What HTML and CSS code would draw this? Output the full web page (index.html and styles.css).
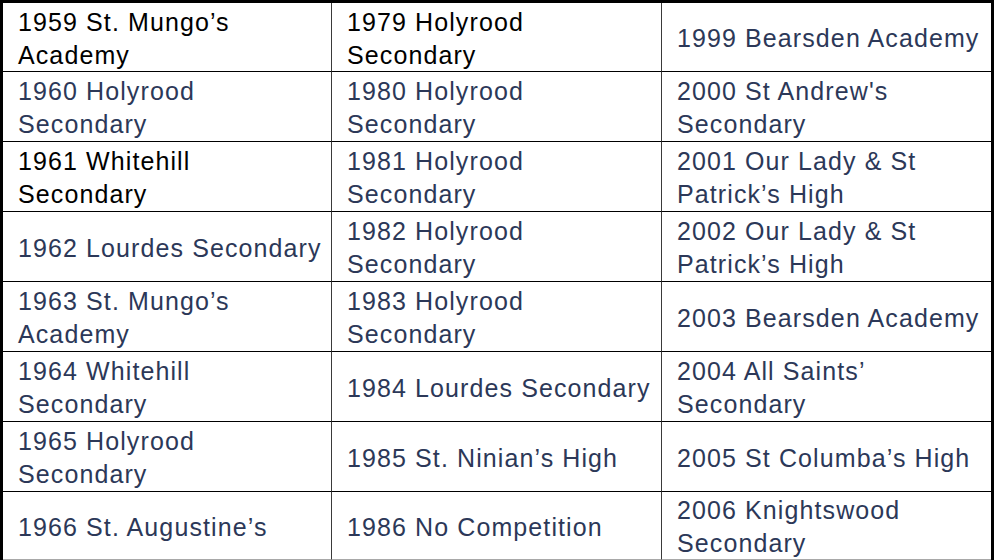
FILE: index.html
```html
<!DOCTYPE html>
<html lang="en">
<head>
<meta charset="utf-8">
<title>Winners</title>
<link rel="stylesheet" href="styles.css">
</head>
<body>
<div class="table">
  <div class="cell c1 r1 black"><span>1959 St. Mungo’s<br>Academy</span></div>
  <div class="cell c2 r1 black"><span>1979 Holyrood<br>Secondary</span></div>
  <div class="cell c3 r1"><span>1999 Bearsden Academy</span></div>

  <div class="cell c1"><span>1960 Holyrood<br>Secondary</span></div>
  <div class="cell c2"><span>1980 Holyrood<br>Secondary</span></div>
  <div class="cell c3"><span>2000 St Andrew's<br>Secondary</span></div>

  <div class="cell c1 black"><span>1961 Whitehill<br>Secondary</span></div>
  <div class="cell c2"><span>1981 Holyrood<br>Secondary</span></div>
  <div class="cell c3"><span>2001 Our Lady &amp; St<br>Patrick’s High</span></div>

  <div class="cell c1"><span>1962 Lourdes Secondary</span></div>
  <div class="cell c2"><span>1982 Holyrood<br>Secondary</span></div>
  <div class="cell c3"><span>2002 Our Lady &amp; St<br>Patrick’s High</span></div>

  <div class="cell c1"><span>1963 St. Mungo’s<br>Academy</span></div>
  <div class="cell c2"><span>1983 Holyrood<br>Secondary</span></div>
  <div class="cell c3"><span>2003 Bearsden Academy</span></div>

  <div class="cell c1"><span>1964 Whitehill<br>Secondary</span></div>
  <div class="cell c2"><span>1984 Lourdes Secondary</span></div>
  <div class="cell c3"><span>2004 All Saints’<br>Secondary</span></div>

  <div class="cell c1"><span>1965 Holyrood<br>Secondary</span></div>
  <div class="cell c2"><span>1985 St. Ninian’s High</span></div>
  <div class="cell c3"><span>2005 St Columba’s High</span></div>

  <div class="cell c1 last"><span>1966 St. Augustine’s</span></div>
  <div class="cell c2 last"><span>1986 No Competition</span></div>
  <div class="cell c3 last"><span>2006 Knightswood<br>Secondary</span></div>
</div>
</body>
</html>
```
FILE: styles.css
```css
html, body {
  margin: 0;
  padding: 0;
  background: #ffffff;
}

.table {
  width: 994px;
  height: 560px;
  box-sizing: border-box;
  border-top: 3px solid #000;
  border-left: 3px solid #000;
  border-right: 3px solid #000;
  display: grid;
  grid-template-columns: 329px 330px 329px;
  grid-template-rows: 69px repeat(6, 70px) 68px;
  background: #fff;
}

.cell {
  box-sizing: border-box;
  display: flex;
  align-items: center;
  padding: 3px 2px 0 15px;
  border-bottom: 1px solid #000;
  font-family: "Liberation Sans", Arial, sans-serif;
  font-size: 25px;
  line-height: 33px;
  letter-spacing: 1.1px;
  color: #2c3858;
  white-space: nowrap;
  overflow: visible;
}

.cell.c1,
.cell.c2 {
  border-right: 1px solid #3a3a3a;
}

.cell.last {
  border-bottom: 1px solid #a8a8a8;
}

.cell.black {
  color: #000;
}
```
